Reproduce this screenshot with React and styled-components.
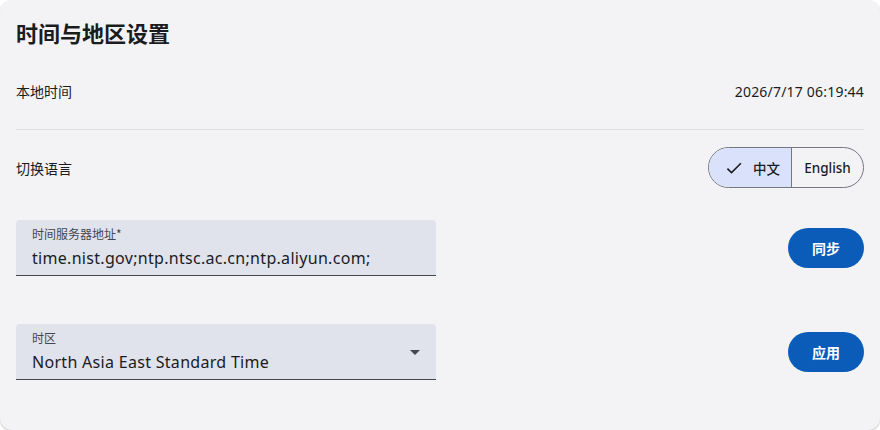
import React, { useState } from "react";
import styled, { createGlobalStyle } from "styled-components";

const GlobalStyle = createGlobalStyle`
  html, body {
    margin: 0;
    padding: 0;
    background: #ffffff;
  }
  body {
    font-family: "Noto Sans", Roboto, "Noto Sans CJK SC", sans-serif;
    color: #1a1c1e;
  }
  * {
    box-sizing: border-box;
  }
`;

const App = () => {
  const [lang, setLang] = useState("zh");
  const [server, setServer] = useState(
    "time.nist.gov;ntp.ntsc.ac.cn;ntp.aliyun.com;"
  );

  return (
    <>
      <GlobalStyle />
      <Card>
        <Title>时间与地区设置</Title>
        <InfoRow>
          <Label>本地时间</Label>
          <Clock>2026/7/17 06:19:44</Clock>
        </InfoRow>
        <Divider />
        <LangRow>
          <Label>切换语言</Label>
          <Segmented>
            <Segment
              $width={82}
              $active={lang === "zh"}
              onClick={() => setLang("zh")}
            >
              {lang === "zh" && (
                <svg width="20" height="20" viewBox="0 0 24 24">
                  <path
                    d="M9 16.2 4.8 12l-1.4 1.4L9 19 21 7l-1.4-1.4L9 16.2z"
                    fill="#1a1c1e"
                  />
                </svg>
              )}
              中文
            </Segment>
            <Segment
              $width={72}
              $active={lang === "en"}
              onClick={() => setLang("en")}
            >
              English
            </Segment>
          </Segmented>
        </LangRow>
        <FieldRow>
          <Field>
            <FieldLabel>时间服务器地址*</FieldLabel>
            <FieldInput
              value={server}
              onChange={(e) => setServer(e.target.value)}
            />
          </Field>
          <Button>同步</Button>
        </FieldRow>
        <FieldRow $top={48}>
          <Field>
            <FieldLabel>时区</FieldLabel>
            <FieldValue>North Asia East Standard Time</FieldValue>
            <Caret viewBox="0 0 10 5" width="10" height="5">
              <path d="M0 0h10L5 5z" fill="#44474e" />
            </Caret>
          </Field>
          <Button>应用</Button>
        </FieldRow>
      </Card>
    </>
  );
};

export default App;

const Card = styled.div`
  width: 880px;
  height: 430px;
  background: #f3f3f6;
  border-radius: 12px;
  box-shadow: 0 1px 2px rgba(0, 0, 0, 0.25);
  padding: 16px;
  display: flex;
  flex-direction: column;
`;

const Title = styled.h1`
  margin: 0;
  font-size: 22px;
  line-height: 32px;
  font-weight: 700;
  font-family: "Noto Sans CJK SC", sans-serif;
  color: #1a1c1e;
`;

const InfoRow = styled.div`
  display: flex;
  align-items: center;
  justify-content: space-between;
  height: 40px;
  margin-top: 23px;
`;

const Label = styled.span`
  font-size: 14px;
  font-family: "Noto Sans CJK SC", sans-serif;
  color: #1a1c1e;
`;

const Clock = styled.span`
  font-size: 14px;
  letter-spacing: 0.2px;
  color: #1a1c1e;
`;

const Divider = styled.hr`
  margin: 18px 0 0;
  border: none;
  border-top: 1px solid #dfe0e4;
`;

const LangRow = styled.div`
  display: flex;
  align-items: center;
  justify-content: space-between;
  margin-top: 17px;
  height: 41px;
`;

const Segmented = styled.div`
  display: flex;
  height: 41px;
  border: 1px solid #74777f;
  border-radius: 21px;
  overflow: hidden;
`;

const Segment = styled.button`
  display: flex;
  align-items: center;
  justify-content: center;
  gap: 9px;
  width: ${(p) => p.$width}px;
  border: none;
  margin: 0;
  padding: ${(p) => (p.$active ? "0 0 0 4px" : "0")};
  cursor: pointer;
  font-family: "Noto Sans", "Noto Sans CJK SC", sans-serif;
  font-size: 13.5px;
  font-weight: 500;
  color: #1a1c1e;
  background: ${(p) => (p.$active ? "#d9e2fa" : "transparent")};
  & + & {
    border-left: 1px solid #74777f;
  }
`;

const FieldRow = styled.div`
  display: flex;
  align-items: center;
  justify-content: space-between;
  margin-top: ${(p) => p.$top || 32}px;
`;

const Field = styled.div`
  position: relative;
  width: 420px;
  height: 56px;
  background: #e0e2ec;
  border-radius: 4px 4px 0 0;
  border-bottom: 1px solid #44474e;
  padding: 6px 16px 0;
  display: flex;
  flex-direction: column;
`;

const FieldLabel = styled.span`
  font-size: 12px;
  line-height: 16px;
  font-family: "Noto Sans CJK SC", sans-serif;
  color: #44474e;
`;

const FieldInput = styled.input`
  border: none;
  background: transparent;
  outline: none;
  padding: 0;
  margin-top: 4px;
  font-family: "Noto Sans", sans-serif;
  font-size: 16px;
  line-height: 24px;
  color: #1a1c1e;
  letter-spacing: 0.3px;
`;

const FieldValue = styled.span`
  margin-top: 4px;
  font-size: 16px;
  line-height: 24px;
  color: #1a1c1e;
  letter-spacing: 0.3px;
`;

const Caret = styled.svg`
  position: absolute;
  right: 16px;
  top: 26px;
`;

const Button = styled.button`
  width: 76px;
  height: 40px;
  border: none;
  border-radius: 20px;
  background: #0b5cb9;
  color: #ffffff;
  font-family: "Noto Sans CJK SC", sans-serif;
  font-size: 14px;
  font-weight: 700;
  cursor: pointer;
`;
